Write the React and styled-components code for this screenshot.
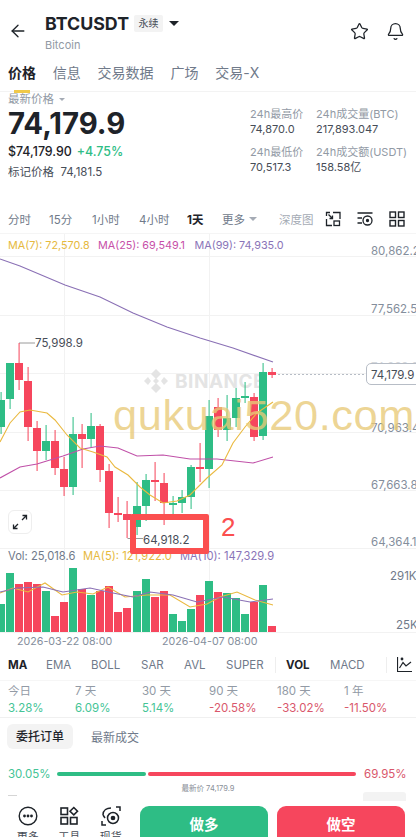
import { ArrowLeft, Star, Bell } from 'lucide-react';
import styled, { createGlobalStyle } from 'styled-components';

const GREEN = '#2ebd85';
const RED = '#f6465d';
const FONT = `Inter, "Noto Sans CJK SC", sans-serif`;

const GlobalStyle = createGlobalStyle`
  html, body { margin: 0; padding: 0; background: #fff; }
  body { font-family: ${FONT}; color: #1e2329; }
`;

const Page = styled.div`
  width: 416px;
  height: 837px;
  overflow: hidden;
  position: relative;
  background: #fff;
`;

// шапка
const Header = styled.header`
  height: 57px;
  display: flex;
  align-items: center;
  padding: 5px 11px 0 8px;
  box-sizing: border-box;
`;
const Title = styled.div`
  margin-left: 17px;
  flex: 1;
`;
const TitleRow = styled.div`
  display: flex;
  align-items: center;
  height: 24px;
  margin-top: 1px;
`;
const Symbol = styled.span`
  font-size: 17.8px;
  font-weight: 700;
`;
const Badge = styled.span`
  margin-left: 5px;
  width: 29px;
  height: 17px;
  line-height: 17px;
  text-align: center;
  background: #f3f3f3;
  border-radius: 2px;
  font-size: 10px;
  color: #474d57;
`;
const Caret = styled.i`
  display: inline-block;
  border-left: ${(p) => p.$size}px solid transparent;
  border-right: ${(p) => p.$size}px solid transparent;
  border-top: ${(p) => p.$size}px solid ${(p) => p.$color};
  margin-left: ${(p) => p.$gap}px;
`;
const SubTitle = styled.div`
  margin-top: 3px;
  font-size: 11px;
  color: #929aa5;
`;
const HeadIcons = styled.div`
  display: flex;
  gap: 17px;
`;

// вкладки
const Tabs = styled.nav`
  height: 35px;
  position: relative;
  display: flex;
  gap: 16.8px;
  align-items: center;
  padding: 0 8px 5px;
  box-sizing: border-box;
  border-bottom: 1px solid #f3f3f3;
  font-size: 14px;
  color: #707a8a;
  &::after {
    content: '';
    position: absolute;
    left: 14px;
    bottom: -2px;
    width: 16px;
    height: 3px;
    background: #f0c94a;
  }
`;
const Tab = styled.span`
  font-weight: ${(p) => (p.$active ? 700 : 400)};
  color: ${(p) => (p.$active ? '#1e2329' : '#707a8a')};
`;

// цена
const PriceBlock = styled.section`
  height: 113px;
  display: flex;
  justify-content: space-between;
  padding: 0 8px;
  box-sizing: border-box;
`;
const LastLabel = styled.div`
  font-size: 11.5px;
  line-height: 14px;
  color: #929aa5;
  display: flex;
  align-items: center;
`;
const BigPrice = styled.div`
  font-size: 29.3px;
  font-weight: 700;
  line-height: 34px;
  margin-top: 1px;
`;
const UsdRow = styled.div`
  font-size: 12.4px;
  font-weight: 500;
  line-height: 16px;
  margin-top: 3px;
`;
const Up = styled.span`
  color: ${GREEN};
  margin-left: 5px;
`;
const MarkRow = styled.div`
  font-size: 11.5px;
  line-height: 16px;
  margin-top: 4px;
  color: #474d57;
`;
const Stats = styled.div`
  width: 158px;
  display: grid;
  grid-template-columns: 66px 1fr;
  grid-auto-rows: 38px;
  padding-top: 15px;
  white-space: nowrap;
`;
const StatLabel = styled.div`
  font-size: 11px;
  line-height: 15px;
  color: #929aa5;
`;
const StatValue = styled.div`
  font-size: 11px;
  line-height: 15px;
  color: #474d57;
`;

// таймфреймы
const TimeBar = styled.div`
  height: 28px;
  display: flex;
  align-items: center;
  padding: 0 0 0 8px;
  position: relative;
  font-size: 11.5px;
  color: #707a8a;
  box-sizing: border-box;
`;
const TimeItem = styled.span`
  width: ${(p) => p.$w}px;
  flex: none;
  display: flex;
  align-items: center;
  font-weight: ${(p) => (p.$active ? 700 : 400)};
  color: ${(p) => (p.$active ? '#1e2329' : p.$muted ? '#a5abb5' : '#707a8a')};
`;
const ToolIcons = styled.div`
  position: absolute;
  left: 325px;
  top: 6px;
  display: flex;
  gap: 16px;
`;

// график
const ChartWrap = styled.section`
  height: 422px;
  position: relative;
  border-top: 1px solid #f5f5f5;
  box-sizing: border-box;
  overflow: hidden;
`;
const ChartSvg = styled.svg`
  display: block;
  font-family: ${FONT};
`;
const Expand = styled.button`
  position: absolute;
  left: 8px;
  top: 276px;
  width: 24px;
  height: 24px;
  padding: 0;
  background: #fff;
  border: 1px solid #eeeeee;
  border-radius: 6px;
  display: flex;
  align-items: center;
  justify-content: center;
`;
const PriceTag = styled.div`
  position: absolute;
  left: 366px;
  top: 129px;
  width: 60px;
  height: 22px;
  line-height: 22px;
  padding-left: 4px;
  box-sizing: border-box;
  background: #fff;
  border: 1px solid #b7bdc6;
  border-radius: 5px;
  font-size: 11.5px;
  white-space: nowrap;
  color: #474d57;
`;
const Watermark = styled.div`
  position: absolute;
  left: 113px;
  top: 158px;
  font-family: "Liberation Sans", sans-serif;
  font-size: 43.4px;
  line-height: 46px;
  letter-spacing: 0.6px;
  color: rgba(232, 202, 120, 0.78);
  white-space: nowrap;
`;
const MarkBox = styled.div`
  position: absolute;
  left: 130px;
  top: 280px;
  width: 79px;
  height: 40px;
  box-sizing: border-box;
  border: 6px solid #fb4f4f;
  border-radius: 2px;
`;
const MarkNumber = styled.div`
  position: absolute;
  left: 221px;
  top: 278px;
  font-family: "Liberation Sans", sans-serif;
  font-size: 26px;
  line-height: 30px;
  color: #fb4f4f;
`;
const LowLabel = styled.div`
  position: absolute;
  left: 143px;
  top: 299px;
  font-size: 11.5px;
  line-height: 14px;
  color: #474d57;
`;

// индикаторы
const IndicatorBar = styled.div`
  height: 25px;
  position: relative;
  font-size: 11.5px;
  color: #707a8a;
  display: flex;
  align-items: center;
  padding: 0 0 6px 8px;
  box-sizing: border-box;
`;
const Indicator = styled.span`
  width: ${(p) => p.$w}px;
  flex: none;
  white-space: nowrap;
  font-weight: ${(p) => (p.$active ? 700 : 400)};
  color: ${(p) => (p.$active ? '#1e2329' : '#707a8a')};
`;
const Divider = styled.i`
  width: 1px;
  height: 16px;
  flex: none;
  background: #eeeeee;
  margin-right: ${(p) => p.$gap}px;
`;
const LineIcon = styled.svg`
  position: absolute;
  left: 397px;
  top: 2px;
`;

const Periods = styled.div`
  height: 38px;
  display: grid;
  grid-template-columns: 67px 67px 67px 68px 67px 1fr;
  padding: 2px 0 0 8px;
  box-sizing: border-box;
  border-top: 1px solid #f6f6f6;
  border-bottom: 1px solid #f0f0f0;
`;
const PeriodName = styled.div`
  font-size: 11.5px;
  line-height: 17px;
  color: #929aa5;
`;
const PeriodValue = styled.div`
  font-size: 11.5px;
  line-height: 17px;
  color: ${(p) => (p.$up ? '#45c496' : '#d9576b')};
`;

const OrderTabs = styled.div`
  height: 44px;
  display: flex;
  align-items: center;
  gap: 18px;
  padding: 0 7px 7px;
  box-sizing: border-box;
  font-size: 12px;
  color: #707a8a;
`;
const OrderPill = styled.span`
  width: 66px;
  height: 25px;
  line-height: 25px;
  text-align: center;
  background: #f3f3f3;
  border-radius: 6px;
  font-weight: 500;
  color: #1e2329;
`;

const Ratio = styled.div`
  height: 24px;
  display: flex;
  align-items: center;
  padding: 0 11px 0 8px;
  font-size: 11.5px;
`;
const RatioText = styled.span`
  width: ${(p) => p.$w}px;
  flex: none;
  color: ${(p) => (p.$up ? '#45c496' : '#d9576b')};
`;
const RatioBar = styled.div`
  flex: 1;
  display: flex;
  gap: 2px;
  margin-right: 8px;
`;
const RatioFill = styled.i`
  height: 4px;
  background: ${(p) => p.$color};
  border-radius: 2px;
  width: ${(p) => p.$w}px;
`;
const DepthHint = styled.div`
  height: 16px;
  margin-top: -3px;
  position: relative;
  font-size: 7.5px;
  line-height: 12px;
  text-align: center;
  color: #8a8f98;
  &::before {
    content: '';
    position: absolute;
    left: 8px;
    top: 12px;
    width: 9px;
    height: 1px;
    background: #d5d5d5;
  }
  &::after {
    content: '';
    position: absolute;
    left: 363px;
    top: 9px;
    width: 43px;
    height: 9px;
    background: #f3f3f3;
    border-radius: 3px 3px 0 0;
  }
`;

// нижняя панель
const BottomBar = styled.footer`
  position: absolute;
  left: 0;
  right: 0;
  top: 805px;
  height: 50px;
  background: #fff;
  display: flex;
  padding-left: 7px;
`;
const BottomItem = styled.div`
  width: 41.5px;
  flex: none;
  display: flex;
  flex-direction: column;
  align-items: center;
  font-size: 11px;
  line-height: 14px;
  color: #474d57;
  padding-top: 1px;
  gap: 4px;
`;
const Actions = styled.div`
  margin-left: 8.5px;
  display: flex;
  gap: 9px;
  padding-top: 1px;
`;
const ActionButton = styled.button`
  width: 128px;
  height: 46px;
  border: none;
  border-radius: 9px;
  background: ${(p) => p.$color};
  color: #fff;
  font-family: ${FONT};
  font-size: 14.5px;
  font-weight: 700;
  padding: 0 0 12px;
`;

// [x, верх тела, низ тела, хай, лоу, цвет]
const candles = [
  [1, 400, 427, 392, 434, 'g'], [10, 363, 399, 363, 409, 'g'], [19, 363, 380, 343, 390, 'r'],
  [28, 381, 427, 367, 441, 'r'], [37, 428, 451, 421, 471, 'r'], [46, 441, 451, 425, 460, 'g'],
  [55, 441, 468, 430, 475, 'r'], [64, 469, 487, 457, 496, 'r'], [73, 434, 487, 417, 495, 'g'],
  [82, 434, 439, 424, 468, 'r'], [91, 426, 439, 413, 448, 'g'], [100, 426, 470, 424, 482, 'r'],
  [109, 471, 513, 464, 528, 'r'], [118, 513, 514, 497, 522, 'r'], [127, 514, 520, 501, 538, 'r'],
  [137, 506, 527, 482, 535, 'g'], [146, 480, 506, 474, 521, 'g'], [155, 480, 482, 462, 501, 'r'],
  [164, 483, 503, 473, 525, 'r'], [173, 503, 504, 496, 520, 'g'], [182, 497, 503, 490, 513, 'g'],
  [191, 467, 497, 465, 509, 'g'], [200, 467, 469, 443, 482, 'r'], [209, 416, 469, 400, 488, 'g'],
  [218, 407, 430, 398, 437, 'r'], [227, 418, 430, 395, 441, 'g'], [236, 398, 418, 388, 427, 'g'],
  [245, 396, 397, 382, 403, 'g'], [254, 397, 437, 393, 441, 'r'], [263, 372, 436, 363, 440, 'g'],
  [272, 372, 375, 368, 378, 'r'],
];

const volumes = [
  [1, 604, 'g'], [10, 573, 'g'], [19, 584, 'r'], [28, 582, 'r'], [37, 584, 'r'], [46, 591, 'g'],
  [55, 616, 'r'], [64, 602, 'r'], [73, 568, 'g'], [82, 589, 'r'], [91, 595, 'g'], [100, 591, 'r'],
  [109, 586, 'r'], [118, 612, 'r'], [127, 608, 'r'], [137, 591, 'g'], [146, 579, 'g'], [155, 597, 'r'],
  [164, 591, 'r'], [173, 614, 'g'], [182, 621, 'g'], [191, 609, 'g'], [200, 595, 'r'], [209, 581, 'g'],
  [218, 592, 'r'], [227, 593, 'g'], [236, 598, 'g'], [245, 614, 'g'], [254, 602, 'r'], [263, 585, 'g'],
  [272, 626, 'r'],
];

const ma99 = '0,259 20,266 65,285 100,297 133,313 167,327 200,338 233,348 273,362';
const ma25 = '0,478 20,467 37,464 63,456 83,449 100,446 118,448 137,456 163,455 190,459 217,459 253,463 273,457';
const ma7 = '0,442 10,423 20,412 30,410 47,413 55,420 67,435 80,448 93,452 107,457 115,467 128,475 140,487 150,495 163,503 177,501 190,495 207,478 222,465 233,443 245,427 257,413 273,402';
const volMa5 = '0,593 13,588 28,592 45,583 62,595 77,592 93,594 108,587 125,597 147,595 170,595 190,607 207,604 220,597 237,592 255,600 273,605';
const volMa10 = '0,592 17,588 43,587 63,592 90,588 113,593 133,597 150,592 173,595 197,602 223,597 250,602 273,599';

const gridY = [256, 315, 373, 432, 490, 548];
const axisLabels = [
  ['80,862.2', 251], ['77,562.5', 309], ['70,963.4', 428], ['67,663.8', 485], ['64,364.1', 542],
];

const periods = [
  ['今日', '3.28%', true], ['7 天', '6.09%', true], ['30 天', '5.14%', true],
  ['90 天', '-20.58%', false], ['180 天', '-33.02%', false], ['1 年', '-11.50%', false],
];

const colorOf = (c) => (c === 'g' ? GREEN : RED);

function Chart() {
  return (
    <ChartSvg width="416" height="421" viewBox="0 234 416 421">
      {gridY.map((y) => (
        <line key={y} x1="0" x2="416" y1={y + 0.5} y2={y + 0.5} stroke="#f2f2f2" />
      ))}
      <line x1="64.5" x2="64.5" y1="234" y2="632" stroke="#f2f2f2" />
      <line x1="209.5" x2="209.5" y1="234" y2="632" stroke="#f2f2f2" />
      <line x1="0" x2="416" y1="632.5" y2="632.5" stroke="#f2f2f2" />

      {/* водяной знак */}
      <g fill="#e4e4e4">
        <polygon points="156,369 161,374 156,379 151,374" />
        <polygon points="148,377 151,381 148,385 144,381" />
        <polygon points="164,377 168,381 164,385 161,381" />
        <polygon points="156,378 159,381 156,384 153,381" />
        <polygon points="156,383 161,388 156,393 151,388" />
      </g>
      <text x="175" y="388" fontSize="19" fontWeight="700" fill="#e4e4e4" letterSpacing="0.5">BINANCE</text>

      <text x="8" y="249" fontSize="10.8" fill="#e6b93d">MA(7): 72,570.8</text>
      <text x="98" y="249" fontSize="10.8" fill="#c74fa8">MA(25): 69,549.1</text>
      <text x="194.5" y="249" fontSize="10.8" fill="#8a74b8">MA(99): 74,935.0</text>

      {axisLabels.map(([t, y]) => (
        <text key={t} x="371" y={y + 4} fontSize="11.5" fill="#848e9c">{t}</text>
      ))}
      <text x="371" y="371" fontSize="11.5" fill="#d5d8dc">74,263.0</text>
      <text x="390" y="580" fontSize="11.5" fill="#707a8a">291K</text>
      <text x="396" y="629" fontSize="11.5" fill="#707a8a">25K</text>

      <line x1="278" x2="366" y1="374.5" y2="374.5" stroke="#b7bdc6" strokeDasharray="2 2" />

      <path d="M19 343 H35" fill="none" stroke="#9a9a9a" />
      <text x="35" y="347" fontSize="11.5" fill="#474d57">75,998.9</text>

      {candles.map(([x, top, bottom, high, low, c]) => (
        <g key={x} fill={colorOf(c)} stroke="none">
          <rect x={x - 0.5} y={high} width="1.2" height={low - high} opacity="0.85" />
          <rect x={x - 4} y={top} width="8" height={Math.max(bottom - top, 2)} />
        </g>
      ))}
      <line x1="127.5" x2="143" y1="538.5" y2="538.5" stroke="#9a9a9a" />

      <polyline points={ma99} fill="none" stroke="#8a70b5" strokeWidth="1.1" />
      <polyline points={ma25} fill="none" stroke="#c050a8" strokeWidth="1.1" />
      <polyline points={ma7} fill="none" stroke="#eab93f" strokeWidth="1.1" />

      <text x="8" y="560" fontSize="11.2" fill="#707a8a">Vol: 25,018.6</text>
      <text x="83" y="560" fontSize="11.2" fill="#e6b93d">MA(5): 121,922.0</text>
      <text x="180" y="560" fontSize="11.2" fill="#8a74b8">MA(10): 147,329.9</text>

      {volumes.map(([x, top, c]) => (
        <rect key={x} x={x - 4} y={top} width="8" height={632 - top} fill={colorOf(c)} />
      ))}
      <polyline points={volMa5} fill="none" stroke="#eab93f" strokeWidth="1.1" />
      <polyline points={volMa10} fill="none" stroke="#8a70b5" strokeWidth="1.1" />

      <text x="17" y="645" fontSize="10.7" fill="#848e9c">2026-03-22 08:00</text>
      <text x="162" y="645" fontSize="10.7" fill="#848e9c">2026-04-07 08:00</text>
    </ChartSvg>
  );
}

export default function App() {
  return (
    <Page>
      <GlobalStyle />
      <Header>
        <ArrowLeft size={20} strokeWidth={1.6} color="#1e2329" />
        <Title>
          <TitleRow>
            <Symbol>BTCUSDT</Symbol>
            <Badge>永续</Badge>
            <Caret $size={5} $color="#1e2329" $gap={6} />
          </TitleRow>
          <SubTitle>Bitcoin</SubTitle>
        </Title>
        <HeadIcons>
          <Star size={19} strokeWidth={1.6} color="#1e2329" />
          <Bell size={19} strokeWidth={1.6} color="#1e2329" />
        </HeadIcons>
      </Header>

      <Tabs>
        <Tab $active>价格</Tab>
        <Tab>信息</Tab>
        <Tab>交易数据</Tab>
        <Tab>广场</Tab>
        <Tab>交易-X</Tab>
      </Tabs>

      <PriceBlock>
        <div>
          <LastLabel>
            最新价格
            <Caret $size={3.5} $color="#a5abb5" $gap={5} />
          </LastLabel>
          <BigPrice>74,179.9</BigPrice>
          <UsdRow>
            $74,179.90<Up>+4.75%</Up>
          </UsdRow>
          <MarkRow>标记价格&nbsp; 74,181.5</MarkRow>
        </div>
        <Stats>
          <div>
            <StatLabel>24h最高价</StatLabel>
            <StatValue>74,870.0</StatValue>
          </div>
          <div>
            <StatLabel>24h成交量(BTC)</StatLabel>
            <StatValue>217,893.047</StatValue>
          </div>
          <div>
            <StatLabel>24h最低价</StatLabel>
            <StatValue>70,517.3</StatValue>
          </div>
          <div>
            <StatLabel>24h成交额(USDT)</StatLabel>
            <StatValue>158.58亿</StatValue>
          </div>
        </Stats>
      </PriceBlock>

      <TimeBar>
        <TimeItem $w={41}>分时</TimeItem>
        <TimeItem $w={43}>15分</TimeItem>
        <TimeItem $w={47}>1小时</TimeItem>
        <TimeItem $w={48}>4小时</TimeItem>
        <TimeItem $w={35} $active>1天</TimeItem>
        <TimeItem $w={57}>
          更多
          <Caret $size={4} $color="#a5abb5" $gap={4} />
        </TimeItem>
        <TimeItem $w={40} $muted>深度图</TimeItem>
        <ToolIcons>
          <svg width="16" height="16" viewBox="0 0 16 16" fill="none" stroke="#1e2329" strokeWidth="1.3">
            <path d="M8 1.5H15V8M1.5 8V14.5H7" />
            <path d="M1.5 5V1.5H5" />
            <path d="M3.5 3.5L7.5 7.5M7.5 4.5V7.5H4.5" />
            <rect x="9" y="10" width="5.5" height="4.5" />
          </svg>
          <svg width="16" height="16" viewBox="0 0 16 16" fill="none" stroke="#1e2329" strokeWidth="1.3">
            <path d="M0.5 2H15.5M0.5 7H5M0.5 12H5" />
            <circle cx="10.5" cy="9.5" r="4.5" />
            <circle cx="10.5" cy="9.5" r="1" fill="#1e2329" />
          </svg>
          <svg width="16" height="16" viewBox="0 0 16 16" fill="none" stroke="#1e2329" strokeWidth="1.4">
            <rect x="1" y="1" width="5.5" height="5.5" />
            <rect x="9.5" y="1" width="5.5" height="5.5" />
            <rect x="1" y="9.5" width="5.5" height="5.5" />
            <rect x="9.5" y="9.5" width="5.5" height="5.5" />
          </svg>
        </ToolIcons>
      </TimeBar>

      <ChartWrap>
        <Chart />
        <Expand aria-label="expand">
          <svg width="16" height="16" viewBox="0 0 16 16" fill="none" stroke="#1e2329" strokeWidth="1.3">
            <path d="M1.5 14.5L6 10M1.5 10.5V14.5H5.5" />
            <path d="M14.5 1.5L10 6M10.5 1.5H14.5V5.5" />
          </svg>
        </Expand>
        <PriceTag>74,179.9</PriceTag>
        <Watermark>qukuai520.com</Watermark>
        <LowLabel>64,918.2</LowLabel>
        <MarkBox />
        <MarkNumber>2</MarkNumber>
      </ChartWrap>

      <IndicatorBar>
        <Indicator $w={38} $active>MA</Indicator>
        <Indicator $w={45}>EMA</Indicator>
        <Indicator $w={50}>BOLL</Indicator>
        <Indicator $w={43}>SAR</Indicator>
        <Indicator $w={42}>AVL</Indicator>
        <Indicator $w={49}>SUPER</Indicator>
        <Divider $gap={10} />
        <Indicator $w={44} $active>VOL</Indicator>
        <Indicator $w={56}>MACD</Indicator>
        <Divider $gap={0} />
        <LineIcon width="15" height="15" viewBox="0 0 15 15" fill="none" stroke="#1e2329" strokeWidth="1.2">
          <path d="M0.5 0V14.5H15" />
          <path d="M2.5 11L6 5.5L9 9L14 5" />
          <circle cx="5" cy="2" r="0.8" fill="#1e2329" />
        </LineIcon>
      </IndicatorBar>

      <Periods>
        {periods.map(([name, value, up]) => (
          <div key={name}>
            <PeriodName>{name}</PeriodName>
            <PeriodValue $up={up}>{value}</PeriodValue>
          </div>
        ))}
      </Periods>

      <OrderTabs>
        <OrderPill>委托订单</OrderPill>
        <span>最新成交</span>
      </OrderTabs>

      <Ratio>
        <RatioText $w={49} $up>30.05%</RatioText>
        <RatioBar>
          <RatioFill $color={GREEN} $w={89} />
          <RatioFill $color={RED} $w={208} />
        </RatioBar>
        <RatioText $w={41}>69.95%</RatioText>
      </Ratio>
      <DepthHint>最新价 74,179.9</DepthHint>

      <BottomBar>
        <BottomItem>
          <svg width="20" height="20" viewBox="0 0 20 20" fill="none" stroke="#1e2329" strokeWidth="1.4">
            <circle cx="10" cy="10" r="8.8" />
            <circle cx="6.5" cy="10" r="0.7" fill="#1e2329" />
            <circle cx="10" cy="10" r="0.7" fill="#1e2329" />
            <circle cx="13.5" cy="10" r="0.7" fill="#1e2329" />
          </svg>
          更多
        </BottomItem>
        <BottomItem>
          <svg width="20" height="20" viewBox="0 0 20 20" fill="none" stroke="#1e2329" strokeWidth="1.6">
            <rect x="2" y="2" width="6.5" height="6.5" />
            <rect x="2" y="11.5" width="6.5" height="6.5" />
            <rect x="11.5" y="11.5" width="6.5" height="6.5" />
            <path d="M14.8 1.5L18.5 5.2L14.8 8.9L11 5.2Z" />
          </svg>
          工具
        </BottomItem>
        <BottomItem>
          <svg width="20" height="20" viewBox="0 0 20 20" fill="none" stroke="#1e2329" strokeWidth="1.5">
            <path d="M15 1H19V5M1 15V19H5" />
            <path d="M2 9C2 4 6 2 10 2M2 9L4 12" />
            <circle cx="12" cy="12" r="5.5" />
            <circle cx="12" cy="12" r="1.6" fill="#1e2329" />
          </svg>
          现货
        </BottomItem>
        <Actions>
          <ActionButton $color={GREEN}>做多</ActionButton>
          <ActionButton $color={RED}>做空</ActionButton>
        </Actions>
      </BottomBar>
    </Page>
  );
}
